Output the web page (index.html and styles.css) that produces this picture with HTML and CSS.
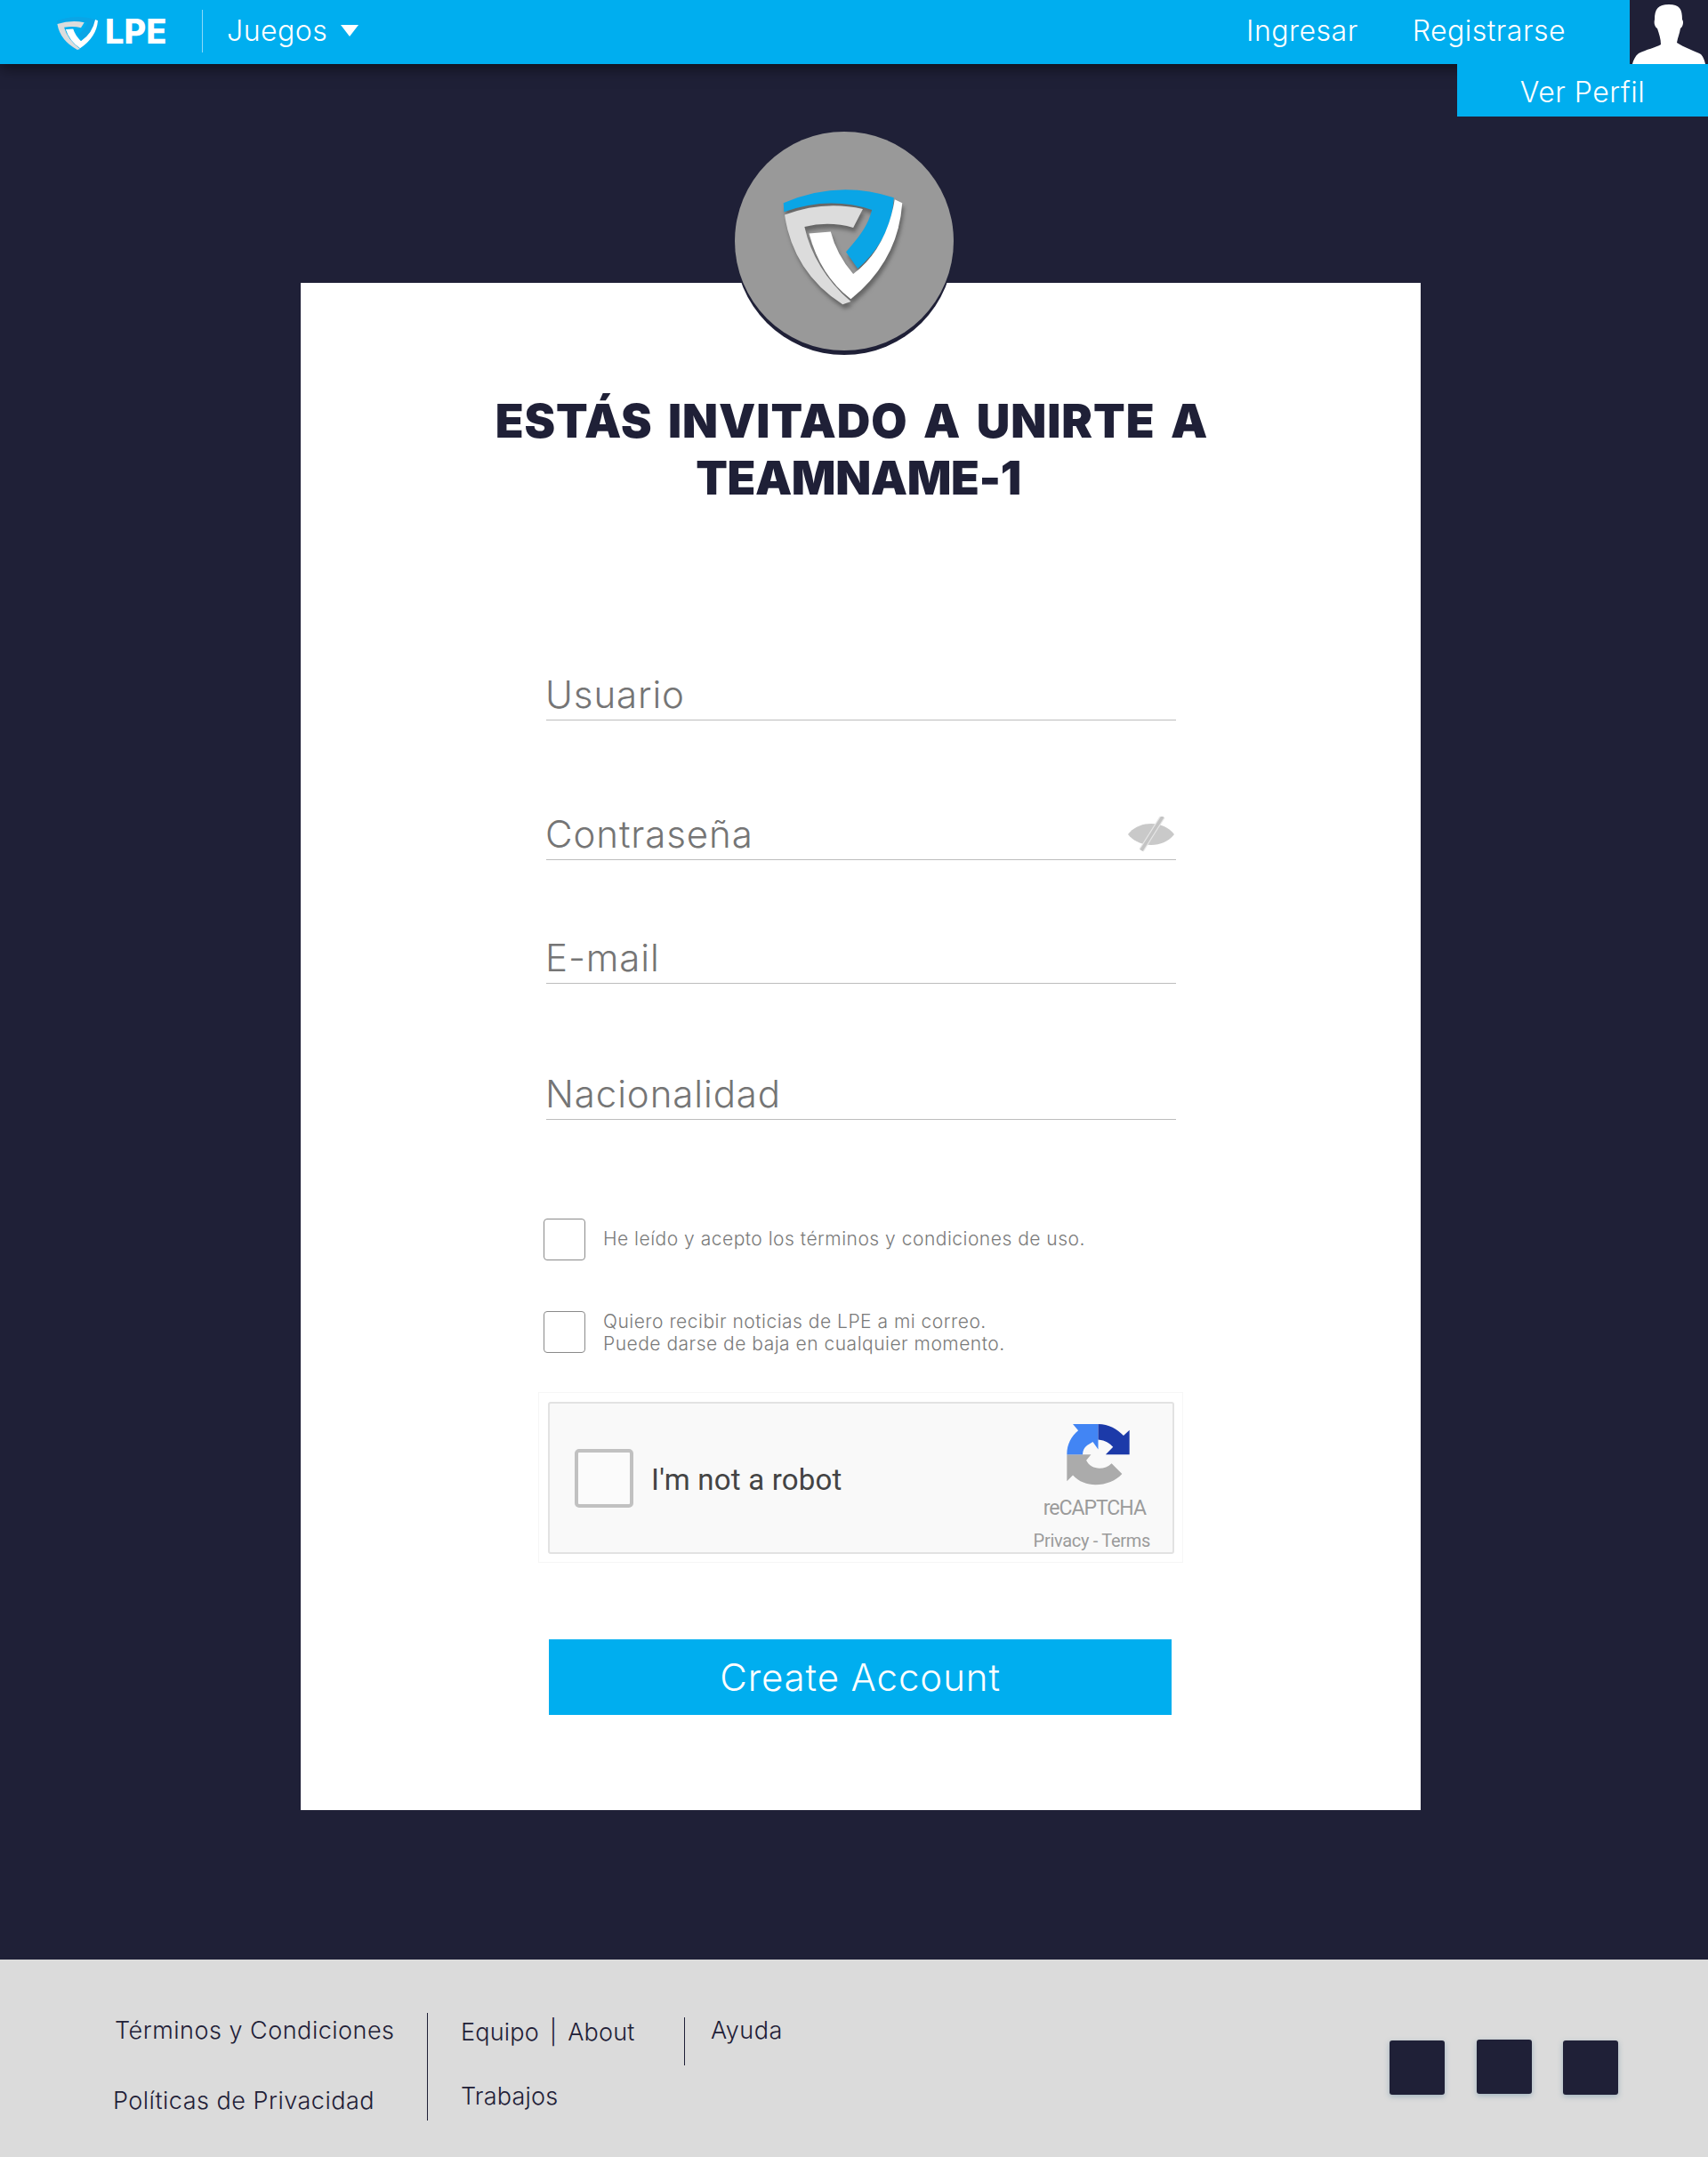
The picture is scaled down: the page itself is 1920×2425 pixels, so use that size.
FILE: index.html
```html
<!DOCTYPE html>
<html>
<head>
	<title>LPE</title>
	<link rel="stylesheet" href="styles.css">
</head>
<body>
<svg class="defs" width="0" height="0">
  <symbol id="shield" viewBox="240 240 420 430" preserveAspectRatio="none">
    <path class="shield-blue" d="M248,295 Q430,215 615,277 C610,370 570,450 495,517 L456,460 C500,410 530,370 542,318 Q400,270 250,325 Z"/>
    <path fill="#dcdcdc" d="M252,335 Q380,285 512,315 L480,378 Q400,355 318,375 Q350,520 472,628 L445,638 Q280,530 252,335 Z"/>
    <path fill="#fff" d="M333,398 L405,392 Q425,470 480,535 Q590,450 618,283 L643,295 Q630,490 472,620 Q370,540 333,398 Z"/>
  </symbol>
</svg>

<header class="topbar">
  <a class="brand">
    <svg class="brand-shield"><use href="#shield"/></svg>
    <span class="brand-name">LPE</span>
  </a>
  <span class="topbar-divider"></span>
  <a class="games">Juegos <span class="caret"></span></a>
  <nav class="topbar-links">
    <a>Ingresar</a>
    <a>Registrarse</a>
  </nav>
  <div class="avatar">
    <svg viewBox="0 0 88 72" width="88" height="72">
      <path fill="#fff" d="M44,5 C56,5 59,10 59,22 C61,24 60,30 57,32 C56,38 54,42 53,48 C60,53 75,58 80,61 C83,64 84,68 85,72 H3 C4,68 6,63 10,60 C18,56 30,53 35,50 C35,44 33,38 31,32 C28,30 27,26 28,22 C28,10 32,5 44,5 Z"/>
    </svg>
  </div>
  <a class="profile-menu">Ver Perfil</a>
</header>

<main class="page">
  <section class="card">
    <div class="team-badge">
      <svg class="team-shield"><use href="#shield"/></svg>
    </div>
    <h1 class="title">
      <span class="title-first">ESTÁS INVITADO A UNIRTE A</span>
      <span class="title-second">TEAMNAME-1</span>
    </h1>

    <form class="form">
      <div class="field">Usuario</div>
      <div class="field field-password">
        Contraseña
        <svg class="eye" viewBox="0 0 54 42" width="54" height="42">
          <path fill="#c9c9c9" d="M0,20 C12,4 40,4 52,20 C40,36 12,36 0,20 Z"/>
          <path d="M39,0 L15,38" stroke="#e6e6e6" stroke-width="6"/>
          <path d="M39,0 L15,38" stroke="#c4c4c4" stroke-width="3.5"/>
        </svg>
      </div>
      <div class="field field-email">E-mail</div>
      <div class="field field-country">Nacionalidad</div>

      <label class="check check-terms">
        <span class="check-box"></span>
        <span class="check-text">He leído y acepto los términos y condiciones de uso.</span>
      </label>
      <label class="check check-news">
        <span class="check-box"></span>
        <span class="check-text">Quiero recibir noticias de LPE a mi correo.<br>Puede darse de baja en cualquier momento.</span>
      </label>

      <div class="captcha">
        <div class="captcha-inner">
          <span class="captcha-box"></span>
          <span class="captcha-label">I'm not a robot</span>
          <div class="captcha-brand">
            <svg class="captcha-logo" viewBox="35 30 210 215" width="71" height="72">
              <path fill="#ababab" d="M35,135 H116 L100,155 C115,187 160,190 185,165 L220,200 C185,240 100,255 55,205 L35,225 Z"/>
              <path fill="#4285f4" d="M35,135 C35,100 50,75 73,55 L55,33 H140 V118 L122,93 L110,100 C95,108 88,120 88,135 Z"/>
              <path fill="#1c3aa9" d="M140,33 C175,33 205,50 225,72 L245,53 V135 H165 L190,110 C180,98 165,87 140,85 Z"/>
            </svg>
            <span class="captcha-name">reCAPTCHA</span>
            <span class="captcha-terms">Privacy - Terms</span>
          </div>
        </div>
      </div>

      <button class="submit" type="button">Create Account</button>
    </form>
  </section>
</main>

<footer class="footer">
  <div class="footer-col footer-legal">
    <a>Términos y Condiciones</a>
    <a class="footer-privacy">Políticas de Privacidad</a>
  </div>
  <div class="footer-col footer-team">
    <a>Equipo | About</a>
    <a>Trabajos</a>
  </div>
  <div class="footer-col footer-help">
    <a>Ayuda</a>
  </div>
  <div class="socials">
    <span class="social"></span>
    <span class="social social-raised"></span>
    <span class="social social-last"></span>
  </div>
</footer>
</body>
</html>
```

FILE: styles.css
```css
* {
  box-sizing: border-box;
}

body {
  margin: 0;
  background: #1f2037;
  color: #1f2037;
  font-family: Inter, "Liberation Sans", sans-serif;
  font-weight: 300;
}

.defs {
  position: absolute;
}

.shield-blue {
  fill: #0aa5e6;
}

/* top bar */
.topbar {
  position: relative;
  display: flex;
  align-items: center;
  height: 72px;
  padding-bottom: 3px;
  background: #00aeef;
  color: #fff;
  font-size: 32px;
  letter-spacing: .5px;
  box-shadow: 0 4px 16px rgba(0, 0, 0, .55);
}

.brand {
  display: flex;
  align-items: center;
  width: 164px;
  margin-left: 63px;
}

.brand-shield {
  width: 49px;
  height: 41px;
  margin-top: 8px;
}

.brand-name {
  margin-left: 6px;
  font-size: 38px;
  font-weight: 800;
  letter-spacing: 0;
}

.topbar-divider {
  width: 1px;
  height: 48px;
  background: rgba(255, 255, 255, .55);
}

.games {
  display: flex;
  align-items: center;
  margin-left: 27px;
}

.caret {
  width: 0;
  height: 0;
  margin-left: 15px;
  border-left: 10px solid transparent;
  border-right: 10px solid transparent;
  border-top: 13px solid #fff;
}

.topbar-links {
  display: flex;
  gap: 61px;
  margin-left: auto;
  margin-right: 72px;
}

.avatar {
  align-self: flex-start;
  width: 88px;
  height: 72px;
  background: #1f2037;
}

.avatar svg {
  display: block;
}

.profile-menu {
  position: absolute;
  top: 72px;
  right: 0;
  width: 282px;
  height: 59px;
  background: #00aeef;
  line-height: 63px;
  text-align: center;
}

/* card */
.page {
  padding: 246px 0 168px 338px;
}

.card {
  display: flow-root;
  width: 1259px;
  padding-bottom: 107px;
  background: #fff;
}

.team-badge {
  display: flex;
  align-items: flex-start;
  width: 246px;
  height: 246px;
  margin: -170px 0 0 488px;
  border-radius: 50%;
  background: #999;
  box-shadow: 0 5px 0 #1f2037;
}

.team-shield {
  width: 142px;
  height: 143px;
  margin: 62px 0 0 52px;
  filter: drop-shadow(2px 5px 2px #666);
}

.title {
  margin: 48px 0 0;
  font-size: 52px;
  font-weight: 900;
  line-height: 64px;
  text-align: center;
}

.title span {
  display: block;
}

.title-first {
  margin-right: 20px;
  letter-spacing: 1px;
  word-spacing: 6px;
}

.title-second {
  margin-right: 5px;
  letter-spacing: -.4px;
}

/* form */
.form {
  width: 708px;
  margin: 183px 0 0 276px;
}

.field {
  position: relative;
  height: 57px;
  border-bottom: 1px solid #bdbdbd;
  color: #757575;
  font-size: 42px;
  letter-spacing: .9px;
  line-height: 56px;
  text-indent: -1px;
}

.field-password {
  margin-top: 100px;
}

.field-email {
  margin-top: 82px;
}

.field-country {
  margin-top: 96px;
}

.eye {
  position: absolute;
  top: 8px;
  right: 0;
}

.check {
  display: flex;
  align-items: center;
  gap: 20px;
  margin-left: -3px;
  color: #7a7a7a;
  font-size: 21px;
  letter-spacing: .5px;
  line-height: 25px;
}

.check-terms {
  margin-top: 111px;
}

.check-news {
  margin-top: 57px;
}

.check-box {
  flex: none;
  width: 47px;
  height: 47px;
  border: 1px solid #8a8a8a;
  border-radius: 4px;
}

.check-text {
  margin-top: -3px;
}

.check-news .check-text {
  margin-top: -1px;
  margin-bottom: -2px;
}

/* captcha */
.captcha {
  width: 725px;
  height: 192px;
  margin: 44px 0 0 -9px;
  padding: 10px 10px 0;
  border: 1px solid #f6f6f6;
}

.captcha-inner {
  display: flex;
  align-items: center;
  width: 704px;
  height: 171px;
  padding: 0 25px 0 28px;
  border: 2px solid #e2e2e2;
  border-radius: 3px;
  background: #f9f9f9;
  font-family: Roboto, sans-serif;
  font-weight: 400;
}

.captcha-box {
  width: 66px;
  height: 66px;
  border: 4px solid #c1c1c1;
  border-radius: 5px;
  background: #fbfbfb;
}

.captcha-label {
  margin: 4px 0 0 20px;
  color: #444;
  font-size: 33px;
  letter-spacing: .2px;
}

.captcha-brand {
  display: flex;
  flex-direction: column;
  align-items: center;
  align-self: flex-start;
  margin-left: auto;
  padding-top: 22px;
  color: #9b9b9b;
}

.captcha-logo {
  display: block;
  margin-left: 14px;
}

.captcha-name {
  margin: 9px 0 0 6px;
  font-size: 23px;
  letter-spacing: -1px;
  line-height: 30px;
}

.captcha-terms {
  margin-top: 9px;
  font-size: 20px;
  letter-spacing: -.3px;
  line-height: 24px;
}

.submit {
  display: block;
  width: 700px;
  height: 85px;
  margin: 86px 0 0 3px;
  border: 0;
  background: #00aeef;
  color: #fff;
  font: inherit;
  font-size: 42px;
  letter-spacing: .9px;
}

/* footer */
.footer {
  display: flex;
  align-items: flex-start;
  height: 222px;
  background: #dbdbdb;
  font-size: 27px;
  letter-spacing: .5px;
}

.footer-col a {
  display: block;
}

.footer-legal {
  width: 351px;
  margin: 64px 0 0 129px;
  line-height: 32px;
}

.footer-privacy {
  margin: 47px 0 0 -2px;
}

.footer-team {
  width: 289px;
  height: 121px;
  margin-top: 60px;
  padding: 6px 0 0 37px;
  border-left: 1px solid #1f2037;
  letter-spacing: .2px;
  line-height: 32px;
  word-spacing: 4px;
}

.footer-team a + a {
  margin-top: 40px;
}

.footer-help {
  height: 54px;
  margin-top: 65px;
  padding-left: 29px;
  border-left: 1px solid #1f2037;
  line-height: 30px;
}

.socials {
  display: flex;
  gap: 36px;
  margin: 91px 101px 0 auto;
}

.social {
  width: 62px;
  height: 61px;
  border-radius: 3px;
  background: #1f2037;
  box-shadow: 0 2px 6px rgba(70, 120, 150, .4);
}

.social-raised {
  margin-top: -1px;
}

.social-last {
  margin-left: -1px;
}
```
